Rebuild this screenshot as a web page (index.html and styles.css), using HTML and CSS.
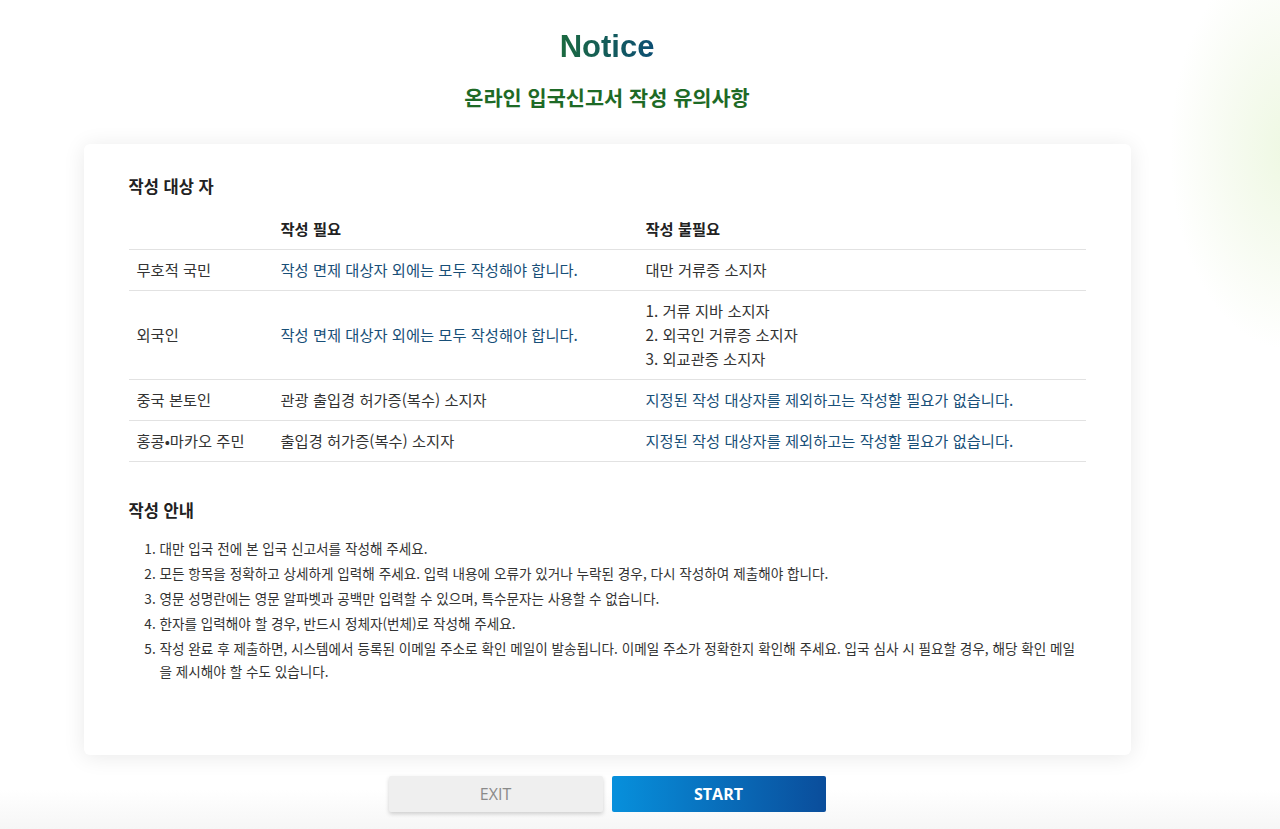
FILE: index.html
```html
<!DOCTYPE html>
<html lang="ko">
<head>
    <meta charset="UTF-8">
    <meta name="viewport" content="width=device-width, initial-scale=1.0">
    <title>Notice</title>
    <link rel="stylesheet" href="styles.css">
</head>
<body>

<div class="page">
    <h1 class="title">Notice</h1>
    <h2 class="subtitle">온라인 입국신고서 작성 유의사항</h2>

    <div class="card">
        <h3>작성 대상 자</h3>
        <table class="target-table">
            <thead>
                <tr>
                    <th class="col-type"></th>
                    <th class="col-need">작성 필요</th>
                    <th>작성 불필요</th>
                </tr>
            </thead>
            <tbody>
                <tr>
                    <td>무호적 국민</td>
                    <td class="blue">작성 면제 대상자 외에는 모두 작성해야 합니다.</td>
                    <td>대만 거류증 소지자</td>
                </tr>
                <tr>
                    <td>외국인</td>
                    <td class="blue">작성 면제 대상자 외에는 모두 작성해야 합니다.</td>
                    <td>1. 거류 지바 소지자<br>2. 외국인 거류증 소지자<br>3. 외교관증 소지자</td>
                </tr>
                <tr>
                    <td>중국 본토인</td>
                    <td>관광 출입경 허가증(복수) 소지자</td>
                    <td class="blue">지정된 작성 대상자를 제외하고는 작성할 필요가 없습니다.</td>
                </tr>
                <tr>
                    <td>홍콩•마카오 주민</td>
                    <td>출입경 허가증(복수) 소지자</td>
                    <td class="blue">지정된 작성 대상자를 제외하고는 작성할 필요가 없습니다.</td>
                </tr>
            </tbody>
        </table>

        <h3 class="guide-title">작성 안내</h3>
        <ol class="guide">
            <li>대만 입국 전에 본 입국 신고서를 작성해 주세요.</li>
            <li>모든 항목을 정확하고 상세하게 입력해 주세요. 입력 내용에 오류가 있거나 누락된 경우, 다시 작성하여 제출해야 합니다.</li>
            <li>영문 성명란에는 영문 알파벳과 공백만 입력할 수 있으며, 특수문자는 사용할 수 없습니다.</li>
            <li>한자를 입력해야 할 경우, 반드시 정체자(번체)로 작성해 주세요.</li>
            <li>작성 완료 후 제출하면, 시스템에서 등록된 이메일 주소로 확인 메일이 발송됩니다. 이메일 주소가 정확한지 확인해 주세요. 입국 심사 시 필요할 경우, 해당 확인 메일을 제시해야 할 수도 있습니다.</li>
        </ol>
    </div>

    <div class="actions">
        <button class="btn btn-exit">EXIT</button>
        <button class="btn btn-start">START</button>
    </div>
</div>

</body>
</html>
```

FILE: styles.css
```css
html, body {
    height: 100%;
}
body {
    margin: 0;
    font-family: "Noto Sans CJK KR", "Noto Sans", sans-serif;
    color: #333;
    background:
        radial-gradient(ellipse 120px 200px at 1290px 150px, #eef8e2 0%, rgba(240, 248, 230, 0.6) 50%, rgba(255, 255, 255, 0) 100%),
        linear-gradient(to bottom, #fff 0, #fff 790px, #f6f6f6 829px);
    overflow: hidden;
}
.page {
    width: 1047px;
    margin: 0 auto;
    padding-top: 27px;
    transform: translateX(-33px);
}
.title {
    margin: 0 auto;
    width: 110px;
    text-align: center;
    font-family: "Liberation Sans", Arial, sans-serif;
    font-size: 31px;
    font-weight: bold;
    line-height: 40px;
    background: linear-gradient(to right, #1d6c3b, #0b4c78);
    -webkit-background-clip: text;
    background-clip: text;
    color: transparent;
}
.subtitle {
    margin: 15px 0 0;
    text-align: center;
    font-size: 20.8px;
    font-weight: bold;
    line-height: 30px;
    color: #1e6a26;
}
.card {
    margin-top: 32px;
    background: #fff;
    border-radius: 6px;
    box-shadow: 0 2px 22px rgba(0, 0, 0, 0.09);
    padding: 30px 45px 62px;
    height: 611px;
    box-sizing: border-box;
}
.card h3 {
    margin: 0;
    font-size: 16.5px;
    font-weight: bold;
    line-height: 24px;
    color: #222;
}
.target-table {
    width: 100%;
    border-collapse: collapse;
    margin-top: 19px;
    font-size: 15.3px;
}
.target-table th {
    text-align: left;
    font-weight: bold;
    color: #222;
    padding: 0 8px 10px;
    line-height: 22px;
    border-bottom: 1px solid #e2e2e2;
}
.col-type {
    width: 128px;
}
.col-need {
    width: 349px;
}
.target-table td {
    padding: 7px 8px 9px;
    line-height: 24px;
    border-bottom: 1px solid #e2e2e2;
    vertical-align: middle;
}
.blue {
    color: #184f78;
}
.guide-title {
    margin-top: 36px !important;
}
.guide {
    margin: 15px 0 0;
    padding-left: 31px;
    font-size: 13.6px;
    line-height: 23px;
    color: #333;
}
.guide li {
    margin-bottom: 2px;
}
.actions {
    display: flex;
    justify-content: center;
    gap: 9px;
    margin-top: 21px;
}
.btn {
    width: 214px;
    height: 36px;
    border: none;
    border-radius: 2px;
    font-family: "Open Sans", "Noto Sans", sans-serif;
    font-size: 16px;
    cursor: pointer;
}
.btn-exit {
    background: #efefef;
    color: #8a8a8a;
    box-shadow: 0 2px 4px rgba(0, 0, 0, 0.18);
}
.btn-start {
    background: linear-gradient(to right, #0790dc, #0a4d9b);
    color: #fff;
    font-weight: bold;
}
```
